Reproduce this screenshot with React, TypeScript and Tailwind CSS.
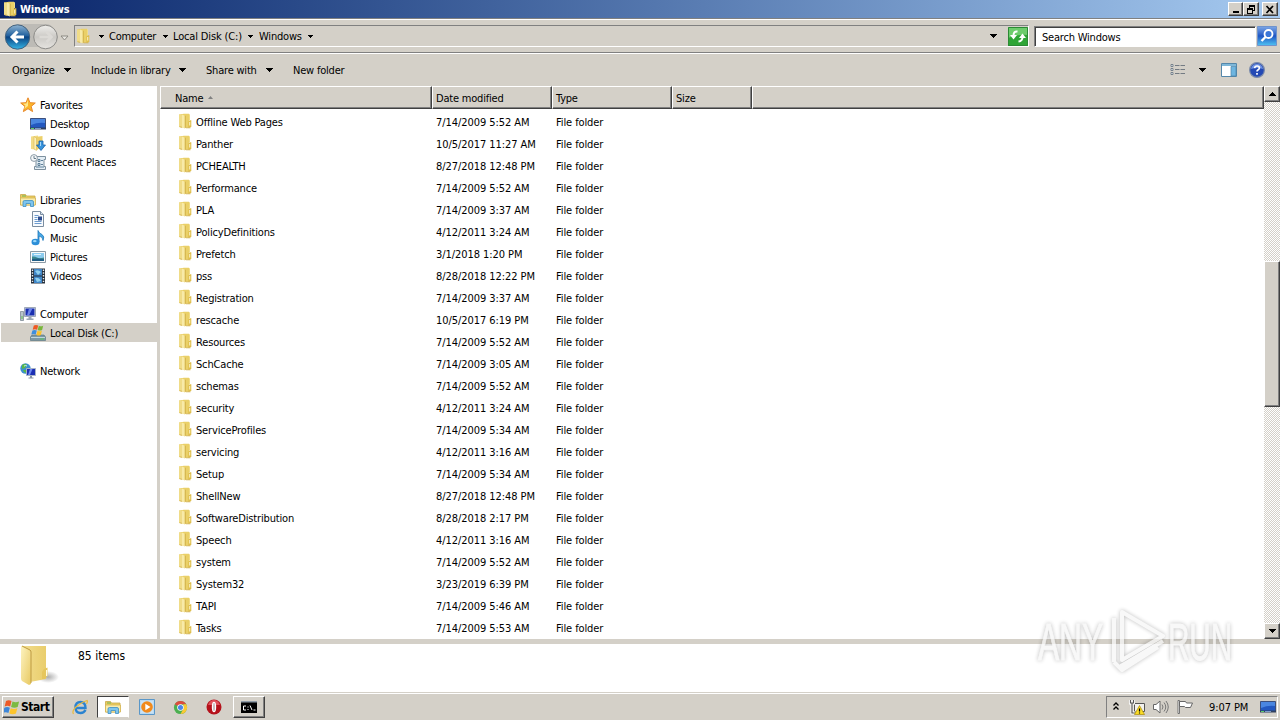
import React from 'react';
import clsx from 'clsx';

interface FileRow {
  name: string;
  date: string;
}

const files: FileRow[] = [
  { name: 'Offline Web Pages', date: '7/14/2009 5:52 AM' },
  { name: 'Panther', date: '10/5/2017 11:27 AM' },
  { name: 'PCHEALTH', date: '8/27/2018 12:48 PM' },
  { name: 'Performance', date: '7/14/2009 5:52 AM' },
  { name: 'PLA', date: '7/14/2009 3:37 AM' },
  { name: 'PolicyDefinitions', date: '4/12/2011 3:24 AM' },
  { name: 'Prefetch', date: '3/1/2018 1:20 PM' },
  { name: 'pss', date: '8/28/2018 12:22 PM' },
  { name: 'Registration', date: '7/14/2009 3:37 AM' },
  { name: 'rescache', date: '10/5/2017 6:19 PM' },
  { name: 'Resources', date: '7/14/2009 5:52 AM' },
  { name: 'SchCache', date: '7/14/2009 3:05 AM' },
  { name: 'schemas', date: '7/14/2009 5:52 AM' },
  { name: 'security', date: '4/12/2011 3:24 AM' },
  { name: 'ServiceProfiles', date: '7/14/2009 5:34 AM' },
  { name: 'servicing', date: '4/12/2011 3:16 AM' },
  { name: 'Setup', date: '7/14/2009 5:34 AM' },
  { name: 'ShellNew', date: '8/27/2018 12:48 PM' },
  { name: 'SoftwareDistribution', date: '8/28/2018 2:17 PM' },
  { name: 'Speech', date: '4/12/2011 3:16 AM' },
  { name: 'system', date: '7/14/2009 5:52 AM' },
  { name: 'System32', date: '3/23/2019 6:39 PM' },
  { name: 'TAPI', date: '7/14/2009 5:46 AM' },
  { name: 'Tasks', date: '7/14/2009 5:53 AM' },
];

/* ---------- icons ---------- */

const FolderIcon = ({ className = 'w-4 h-4' }: { className?: string }) => (
  <svg viewBox="0 0 16 16" className={clsx('shrink-0', className)}>
    <path d="M2 1.500 7 .8h5v14H7l-5-.8z" fill="#ead068" />
    <path d="M2 1.500 5 2v12.500l-3-.7z" fill="#f0dc88" />
    <path d="M5 1.600 7.800 2.800V15.500L5 14.300z" fill="#f8eaa8" />
    <path d="M7.800 2.800h.9v12l-.9.7z" fill="#cfae48" />
    <path d="M12 1.200h1v6h-1z" fill="#f0dc88" />
    <path d="M11.300 8.500 13 7.300h1.300v6L13 14.800h-1.700z" fill="#dfbe4c" />
    <path d="M12.300 9h.9v3.500h-.9z" fill="#fff8da" />
    <path d="M2.500 13.700 5 14.300M9 14.800h4.500" stroke="#d0b050" strokeWidth=".8" />
  </svg>
);

const BigFolder = () => (
  <svg viewBox="0 0 42 44" className="w-[42px] h-[44px] shrink-0">
    <defs>
      <linearGradient id="bf1" x1="0" x2="1" y1="0" y2="1">
        <stop offset="0" stopColor="#fdf3c0" />
        <stop offset="1" stopColor="#e8c962" />
      </linearGradient>
      <linearGradient id="bf3" x1="0" x2="1" y1="0" y2="0">
        <stop offset="0" stopColor="#f2dd8e" />
        <stop offset="1" stopColor="#e9cd6c" />
      </linearGradient>
      <radialGradient id="bf2">
        <stop offset="0" stopColor="#777" stopOpacity=".6" />
        <stop offset="1" stopColor="#777" stopOpacity="0" />
      </radialGradient>
    </defs>
    <ellipse cx="28" cy="33" rx="11" ry="6" fill="url(#bf2)" />
    <path d="M2 2 26 2V35L10 38z" fill="url(#bf3)" />
    <path d="M24 25l3.500-1.500v8L25 35h-3V28z" fill="#e6c65c" />
    <path d="M26 26h1.200v6H26z" fill="#fffbe0" />
    <path d="M1 2 10 6q1 1 1 2v32l-2 1-7-4q-1-1-1-3z" fill="url(#bf1)" />
    <path d="M2 2 10 6q1 1 1 2v31" fill="none" stroke="#b8933a" strokeWidth=".9" />
  </svg>
);

const StarIcon = () => (
  <svg viewBox="0 0 16 16" className="w-4 h-4 shrink-0">
    <path d="M8 .8 10 5.700l5.300.3-4.100 3.400 1.400 5.200L8 11.700l-4.600 2.900 1.400-5.200L.7 6l5.300-.3z" fill="#fbb52a" stroke="#e8892b" strokeWidth="1" />
    <path d="M8 3v6L4 12l1.500-3.500L3 6.800l3.500-.3z" fill="#ffe88a" />
  </svg>
);

const DesktopIcon = () => (
  <svg viewBox="0 0 16 16" className="w-4 h-4 shrink-0">
    <path d="M.5 2.500h15v10H.5z" fill="#2358c0" stroke="#3c4f7c" />
    <path d="M1 3h14v4Q8 6 1 9z" fill="#4a86e0" />
    <path d="M0 11.500h16v2H0z" fill="#31415f" />
    <path d="M1 12h3v1H1z" fill="#5fd06a" />
    <path d="M5 12h6v1H5z" fill="#7e9bc8" />
  </svg>
);

const DownloadsIcon = () => (
  <svg viewBox="0 0 16 16" className="w-4 h-4 shrink-0">
    <path d="M1 1.500 8 .5V15l-7-1z" fill="#f3dc86" />
    <path d="M5 2 12.500 1v13H6z" fill="#ecd06a" />
    <path d="M4 1.500 6.500 3v12.500L4 14z" fill="#fbf0b8" stroke="#d4b04a" strokeWidth=".5" />
    <path d="M9 6h4v4h2.500L11 15.500 6.500 10H9z" fill="#3793dc" stroke="#1b62a8" strokeWidth=".8" />
    <path d="M10 7h1v4h-1z" fill="#a5d8fa" />
  </svg>
);

const RecentIcon = () => (
  <svg viewBox="0 0 16 16" className="w-4 h-4 shrink-0">
    <path d="M6 2.500h9.500v3H14v7h1.500v3H4.500v-3H6z" fill="#e3edf4" stroke="#7d909e" />
    <path d="M8 5.500h2v2H8zM8 9.500h2v2H8zM11 6.500h2M11 10.500h2M6 13h8" fill="none" stroke="#5e8099" />
    <circle cx="4" cy="4" r="3.400" fill="#f5f8fa" stroke="#8c9ba6" />
    <path d="M4 2v2.500h2" fill="none" stroke="#59707f" strokeWidth=".9" />
  </svg>
);

const LibrariesIcon = ({ className = 'w-4 h-4' }: { className?: string }) => (
  <svg viewBox="0 0 16 16" className={clsx('shrink-0', className)}>
    <path d="M.5 2.500h5l1 1.500h8.500v9H.5z" fill="#eccd60" stroke="#c9a749" strokeWidth=".8" />
    <path d="M2 3.500h4v1H2z" fill="#6bb257" />
    <path d="M.5 6h15v7H.5z" fill="#f9ebac" stroke="#d5b550" strokeWidth=".8" />
    <path d="M3 14.500V10q0-1.500 1.500-1.500h7.500q1.500 0 1.500 1.500v4.500h-3v-3H6v3z" fill="#7ec5ee" stroke="#3e8fc4" strokeWidth=".8" />
  </svg>
);

const DocumentIcon = () => (
  <svg viewBox="0 0 16 16" className="w-4 h-4 shrink-0">
    <path d="M2.500.5h8l3 3v12h-11z" fill="#f8fbfe" stroke="#7b8da0" />
    <path d="M10.500.5v3h3" fill="#d6e2ee" stroke="#7b8da0" />
    <path d="M4.500 4.500h4M4.500 6.500h3M4.500 12.500h7M4.500 10.500h7" stroke="#6c9bcf" />
    <path d="M8 5.500h4v4H8z" fill="#2d4c8e" />
    <path d="M4.500 8.500h3" stroke="#6c9bcf" />
  </svg>
);

const MusicIcon = () => (
  <svg viewBox="0 0 16 16" className="w-4 h-4 shrink-0">
    <path d="M8 .5q1 3 4 4 3 2 1 6 0-4-4-4.500V12H8z" fill="#49a9e6" stroke="#1c77ba" strokeWidth=".8" />
    <ellipse cx="5.500" cy="12" rx="4" ry="3.200" fill="#2c8fd8" />
    <ellipse cx="4.800" cy="11.200" rx="1.800" ry="1.100" fill="#9bd8fa" />
  </svg>
);

const PicturesIcon = () => (
  <svg viewBox="0 0 16 16" className="w-4 h-4 shrink-0">
    <path d="M.5 2.500h15v11H.5z" fill="#fafafa" stroke="#8c9aa5" />
    <path d="M2 4h12v8H2z" fill="#8ccbee" />
    <path d="M2 7.500q3-.5 5 1t7 0V12H2z" fill="#3c8a8f" />
    <path d="M2 10q6-1 12 0v2H2z" fill="#1f5e86" />
    <path d="M4 5h7v1H4z" fill="#e2f4fd" />
  </svg>
);

const VideosIcon = () => (
  <svg viewBox="0 0 16 16" className="w-4 h-4 shrink-0">
    <path d="M1 .5h14v15H1z" fill="#26303c" />
    <path d="M4 1h8v6.500H4zM4 8.500h8V15H4z" fill="#3f86c8" />
    <path d="M5 3q3-2 6 1L8 7zM5 10q4-1 6 3l-4 1z" fill="#8fd0ee" />
    <path d="M2.500 1.500v13M13.500 1.500v13" stroke="#e9eef2" strokeWidth="1.400" strokeDasharray="1.400 1.400" />
  </svg>
);

const ComputerIcon = () => (
  <svg viewBox="0 0 16 16" className="w-4 h-4 shrink-0">
    <path d="M.5 5.500h3v9h-3z" fill="#b8c4cc" stroke="#7f8c96" strokeWidth=".8" />
    <path d="M1.500 10h1v3h-1z" fill="#63c04d" />
    <path d="M4.500 1.500h11v9h-11z" fill="#d6dde6" stroke="#8b97a8" strokeWidth=".8" />
    <path d="M5.500 2.500h9v7h-9z" fill="#1a2fb0" />
    <path d="M9 2.500h3.500L9 9.500H7z" fill="#6d86ea" />
    <path d="M8.500 11h3v1.500h2v1.500h-7v-1.500h2z" fill="#9aa6b4" />
  </svg>
);

const DiskIcon = () => (
  <svg viewBox="0 0 16 16" className="w-4 h-4 shrink-0">
    <path d="M2 10h12l1.500 2v3.500H.5V12z" fill="#7e98a4" stroke="#52707e" strokeWidth=".6" />
    <path d="M1 12h14v1H1z" fill="#bfd6de" />
    <path d="M10 13.500h4v1h-4z" fill="#58c862" />
    <path d="M3.800.5q2.200-1 4.400 0L7.100 4.700q-2.200-1-4.400 0z" fill="#ee5a24" />
    <path d="M8.800.8q2.200 1 4.400 0l-1.100 4.200q-2.200 1-4.400 0z" fill="#78b63a" />
    <path d="M2.400 5.400q2.200-1 4.400 0l-1.100 4.200q-2.200-1-4.400 0z" fill="#3e8edc" />
    <path d="M7.500 5.800q2.200 1 4.400 0L10.800 10q-2.200 1-4.400 0z" fill="#fbc129" />
  </svg>
);

const NetworkIcon = () => (
  <svg viewBox="0 0 16 16" className="w-4 h-4 shrink-0">
    <circle cx="5.500" cy="5.500" r="5.200" fill="#3c8fd0" />
    <path d="M2 2q3-2 5 0L5 5l-3 1zM3 7l3 0 1 3q-3 0-4-3z" fill="#58b848" />
    <path d="M4 3q2-1 3 0" stroke="#c9f0f8" fill="none" />
    <path d="M6.500 5.500h9v7h-9z" fill="#1b2fb4" stroke="#a7b3c6" />
    <path d="M10 6h2.500L10 12H8z" fill="#6f8af0" />
    <path d="M10 13h2v1.500h1.500v1h-5v-1H10z" fill="#8794a4" />
  </svg>
);

const WindowsFlag = () => (
  <svg viewBox="1 1.500 14.500 13" className="w-4 h-[15px] shrink-0">
    <path d="M2.800 2.200q2.500-1.500 5 0L6.600 7q-2.400-1.300-5 0z" fill="#ec5a28" />
    <path d="M8.700 2.600q2.800 1.400 6 0L13.400 7.500q-3 1.500-6 0z" fill="#7cba42" />
    <path d="M1.300 8.200q2.500-1.400 5 0L5 13q-2.400-1.300-5 0z" fill="#3d86d8" />
    <path d="M7.100 8.700q2.800 1.400 6 0l-1.300 4.800q-3 1.400-6 0z" fill="#fcc42c" />
  </svg>
);

const Caret = ({ className = 'w-[7px] h-1' }: { className?: string }) => (
  <svg viewBox="0 0 7 4" className={clsx('shrink-0', className)} shapeRendering="crispEdges">
    <path d="M0 0h7L3.500 4z" />
  </svg>
);

const navItems = [
  { label: 'Favorites', icon: <StarIcon />, top: true },
  { label: 'Desktop', icon: <DesktopIcon /> },
  { label: 'Downloads', icon: <DownloadsIcon /> },
  { label: 'Recent Places', icon: <RecentIcon /> },
  null,
  { label: 'Libraries', icon: <LibrariesIcon />, top: true },
  { label: 'Documents', icon: <DocumentIcon /> },
  { label: 'Music', icon: <MusicIcon /> },
  { label: 'Pictures', icon: <PicturesIcon /> },
  { label: 'Videos', icon: <VideosIcon /> },
  null,
  { label: 'Computer', icon: <ComputerIcon />, top: true },
  { label: 'Local Disk (C:)', icon: <DiskIcon />, active: true },
  null,
  { label: 'Network', icon: <NetworkIcon />, top: true },
];

/* ---------- window chrome ---------- */

const raised = 'bg-[#d4d0c8] border border-t-white border-l-white border-r-[#404040] border-b-[#404040] shadow-[inset_-1px_-1px_0_#808080]';

const TitleBar = () => (
  <div className="h-[18px] shrink-0 flex items-center pl-0.5 bg-linear-to-r from-[#0a246a] to-[#a6caf0]">
    <FolderIcon />
    <span className="ml-0.5 text-white font-bold tracking-[-0.1px]">Windows</span>
    <div className="ml-auto mr-0.5 flex">
      <button className={clsx(raised, 'w-[15px] h-3.5 flex items-center justify-center')}>
        <svg viewBox="0 0 10 9" className="w-2.5 h-[9px] shrink-0" shapeRendering="crispEdges"><path d="M2 6h6v2H2z" /></svg>
      </button>
      <button className={clsx(raised, 'w-4 h-3.5 flex items-center justify-center')}>
        <svg viewBox="0 0 10 9" className="w-2.5 h-[9px] shrink-0" shapeRendering="crispEdges">
          <path d="M3 0h6v6H7V5h1V2H4v1H3zM1 3h6v6H1zm1 2v3h4V5z" fillRule="evenodd" />
        </svg>
      </button>
      <button className={clsx(raised, 'ml-[3px] w-4 h-3.5 flex items-center justify-center')}>
        <svg viewBox="0 0 10 9" className="w-2.5 h-[9px] shrink-0"><path d="M1.500 1 8 8M8 1 1.500 8" stroke="#000" strokeWidth="1.700" /></svg>
      </button>
    </div>
  </div>
);

const NavButtons = () => (
  <svg viewBox="0 0 70 30" className="w-[70px] h-[30px] shrink-0">
    <defs>
      <linearGradient id="back" x1="0" x2="0" y1="0" y2="1">
        <stop offset="0" stopColor="#8fb4d2" />
        <stop offset=".45" stopColor="#20609e" />
        <stop offset=".5" stopColor="#0b4382" />
        <stop offset="1" stopColor="#35b5e6" />
      </linearGradient>
      <linearGradient id="fwd" x1="0" x2="0" y1="0" y2="1">
        <stop offset="0" stopColor="#efeeeb" />
        <stop offset=".5" stopColor="#cbc9c5" />
        <stop offset="1" stopColor="#e6e4e0" />
      </linearGradient>
    </defs>
    <path d="M17 3h29q5 0 8 5v12q-4 6-9 6H17z" fill="#bdbbb6" />
    <circle cx="17.500" cy="16" r="12.200" fill="url(#back)" stroke="#43617c" />
    <circle cx="45.500" cy="16" r="11.800" fill="url(#fwd)" stroke="#8c8b88" />
    <path d="M24 16H12.500M17.500 10.500 12 16l5.500 5.500" fill="none" stroke="#fff" strokeWidth="3" />
    <path d="M39.500 16H51M46.500 11l5 5-5 5" fill="none" stroke="#dcdad6" strokeWidth="2.600" />
    <path d="M61 15h7l-3.500 4z" fill="#e9e7e2" stroke="#85827c" strokeWidth=".9" />
  </svg>
);

const AddressBar = () => (
  <div className="h-9 shrink-0 flex items-center border-t border-b border-t-[#808080] border-b-white shadow-[inset_0_1px_0_#fff,inset_0_-1px_0_#808080]">
    <NavButtons />
    <div className="ml-1 h-[22px] flex-1 flex items-center border border-t-[#808080] border-l-[#808080] border-r-white border-b-white">
      <FolderIcon />
      <Caret className="w-[5px] h-[3px] ml-2" />
      <span className="ml-[5px] w-[51px] shrink-0 tracking-[-0.26px]">Computer</span>
      <Caret className="w-[5px] h-[3px] ml-[3px]" />
      <span className="ml-[5px] w-[69px] shrink-0 tracking-[-0.15px]">Local Disk (C:)</span>
      <Caret className="w-[5px] h-[3px] ml-1.5" />
      <span className="ml-1.5 w-[43px] shrink-0">Windows</span>
      <Caret className="w-[5px] h-[3px] ml-1.5" />
      <Caret className="w-[7px] h-1 ml-auto mr-[11px]" />
      <svg viewBox="0 0 20 19" className="w-5 h-[19px] shrink-0">
        <path d="M0 0h20v19H0z" fill="#2fa536" />
        <path d="M0 0h20v8Q10 7 0 11z" fill="#6dcc6c" />
        <path d="M.5.5h19v18H.5z" fill="none" stroke="#2c8a35" />
        <path d="M9.500 4.500Q5.500 4 5.500 8.500M14.500 10q0 4-4 4.500" fill="none" stroke="#fff" strokeWidth="2" />
        <path d="M2 8h7l-3.500 4.500zM11 11h7l-3.500-4.500z" fill="#fff" />
      </svg>
    </div>
    <div className="ml-[5px] w-[222px] shrink-0 h-[21px] bg-white border border-t-[#808080] border-l-[#808080] border-r-white border-b-white shadow-[inset_1px_1px_0_#404040] flex items-center pl-[7px] pt-0.5">
      <span>Search Windows</span>
    </div>
    <svg viewBox="0 0 20 20" className="ml-px mr-[3px] w-5 h-5 shrink-0">
      <defs>
        <linearGradient id="find" x1="0" x2="0" y1="0" y2="1">
          <stop offset="0" stopColor="#7da7e6" />
          <stop offset=".5" stopColor="#1f56c4" />
          <stop offset="1" stopColor="#4fc3f2" />
        </linearGradient>
      </defs>
      <path d="M.5.5h19v19H.5z" fill="url(#find)" stroke="#6f93cc" />
      <circle cx="11.500" cy="8" r="4" fill="#3a76d8" stroke="#fff" strokeWidth="1.800" />
      <path d="M8.500 11 4.500 15" stroke="#fff" strokeWidth="2.400" />
    </svg>
  </div>
);

const CommandBar = () => (
  <div className="h-8 shrink-0 flex items-center pl-3">
    <span className="w-[52px]">Organize</span>
    <Caret />
    <span className="ml-5 w-[88px]">Include in library</span>
    <Caret />
    <span className="ml-5 w-[60px]">Share with</span>
    <Caret />
    <span className="ml-5">New folder</span>
    <div className="ml-auto mr-[15px] flex items-center">
      <svg viewBox="0 0 16 14" className="w-4 h-3.5">
        <path d="M1 1.500h2v2H1zM1 5.500h2v2H1zM1 9.500h2v2H1z" fill="#fff" stroke="#75818c" />
        <path d="M5 2.500h4.500M10.500 2.500H15M5 6.500h4.500M10.500 6.500H15M5 10.500h4.500M10.500 10.500H15" stroke="#737b83" />
      </svg>
      <Caret className="w-[7px] h-1 ml-[13px]" />
      <svg viewBox="0 0 16 14" className="ml-[15px] w-4 h-3.5">
        <path d="M.5.5h15v13H.5z" fill="#fff" stroke="#5487aa" />
        <path d="M1 1h14v2H1z" fill="#7eb7d8" />
        <path d="M10 3.500h5V13h-5z" fill="#6db5e0" stroke="#4a83a8" strokeWidth=".7" />
      </svg>
      <svg viewBox="0 0 16 16" className="ml-3 w-4 h-4">
        <circle cx="8" cy="8" r="7.400" fill="#2449b4" stroke="#7c8cab" strokeWidth="1.200" />
        <path d="M2 7q1-5 6-5t6 5q-6-2-12 0z" fill="#6f92e2" />
        <path d="M5.600 6.200Q5.800 4 8.100 4t2.300 2q0 1-1.200 1.700T8 9.500M8 11v1.700" fill="none" stroke="#fff" strokeWidth="1.700" />
      </svg>
    </div>
  </div>
);

const Sidebar = () => (
  <div className="w-[157px] shrink-0 bg-white pt-[9px]">
    {navItems.map((item, i) =>
      item ? (
        <div
          key={item.label}
          className={clsx('h-[19px] ml-px flex items-center', item.top ? 'pl-[19px]' : 'pl-[29px]', item.active && 'bg-[#d4d0c8]')}
        >
          {item.icon}
          <span className="ml-1 pt-0.5">{item.label}</span>
        </div>
      ) : (
        <div key={i} className="h-[19px]" />
      )
    )}
  </div>
);

const headerCell = 'h-full flex items-center pl-[3px] pt-0.5 border-t border-l border-r border-b border-t-white border-l-white border-r-[#404040] border-b-[#404040] shadow-[inset_-1px_-1px_0_#808080]';

const FileList = () => (
  <div className="flex-1 min-w-0 bg-white">
    <div className="h-[23px] flex bg-[#d4d0c8]">
      <div className={clsx(headerCell, 'w-[272px]')}>
        <span className="ml-[11px]">Name</span>
        <svg viewBox="0 0 5 3" className="ml-[5px] mb-0.5 w-[5px] h-[3px]"><path d="M0 3h5L2.500 0z" fill="#808080" /></svg>
      </div>
      <div className={clsx(headerCell, 'w-[120px]')}>Date modified</div>
      <div className={clsx(headerCell, 'w-[120px]')}>Type</div>
      <div className={clsx(headerCell, 'w-20')}>Size</div>
      <div className={clsx(headerCell, 'flex-1')} />
    </div>
    <div className="pt-0.5">
      {files.map(f => (
        <div key={f.name} className="h-[22px] flex items-center">
          <div className="w-[276px] pl-[17px] flex items-center">
            <FolderIcon className="w-4 h-4 mb-0.5" />
            <span className="ml-[3px] tracking-[-0.16px]">{f.name}</span>
          </div>
          <span className="w-[120px] tracking-[-0.06px]">{f.date}</span>
          <span className="tracking-[-0.1px]">File folder</span>
        </div>
      ))}
    </div>
  </div>
);

const Scrollbar = () => (
  <div className="w-4 shrink-0 flex flex-col bg-[repeating-conic-gradient(#d4d0c8_0_25%,#fff_0_50%)] bg-[length:2px_2px]">
    <div className={clsx(raised, 'h-4 flex items-center justify-center')}>
      <Caret className="w-[7px] h-1 rotate-180" />
    </div>
    <div className={clsx(raised, 'mt-[159px] h-[146px]')} />
    <div className={clsx(raised, 'mt-auto h-4 flex items-center justify-center')}>
      <Caret />
    </div>
  </div>
);

const Watermark = () => (
  <svg viewBox="0 0 250 80" className="absolute left-[1030px] top-[600px] w-[250px] h-20 opacity-75 drop-shadow-[0_0_2px_rgba(0,0,0,0.35)]">
    <g fill="#f6f6f6" stroke="#f6f6f6" strokeWidth=".8" fontFamily="Liberation Sans Narrow, Liberation Sans, sans-serif" fontSize="51">
      <text x="8" y="60" textLength="65" lengthAdjust="spacingAndGlyphs">ANY</text>
      <text x="138" y="60" textLength="64" lengthAdjust="spacingAndGlyphs">RUN</text>
    </g>
    <path d="M92 12 133 36 92 60zM84 18v44M91 70v-4l42-25M84 62l8 8 36-23" fill="none" stroke="#f6f6f6" strokeWidth="4" strokeLinejoin="round" />
  </svg>
);

/* ---------- taskbar ---------- */

const IeIcon = () => (
  <svg viewBox="0 0 16 16" className="w-4 h-4">
    <path d="M13.500 11Q12 14 8.500 14 3.500 14 3.500 8.500T8.500 3q5 0 5 6H4" fill="none" stroke="#2b83d0" strokeWidth="2.400" />
    <path d="M1.500 15Q-.5 12 4.500 7.500T15 1.500Q16 2.500 14.500 5" fill="none" stroke="#e9b93c" strokeWidth="1.200" />
  </svg>
);

const PlayerIcon = () => (
  <svg viewBox="0 0 16 16" className="w-4 h-4">
    <path d="M.5.5h15v15H.5z" fill="#b9daf2" stroke="#5a97c8" />
    <path d="M2 2h12v12H2z" fill="#c9e2f5" />
    <circle cx="8" cy="8" r="5.800" fill="#f18a1c" />
    <path d="M6.300 4.800v6.400L11.500 8z" fill="#fff" />
  </svg>
);

const ChromeIcon = () => (
  <svg viewBox="0 0 16 16" className="w-[15px] h-[15px]">
    <circle cx="8" cy="8" r="7" fill="#4caf50" />
    <path d="M8 8 1.900 4.500A7 7 0 0 1 14.100 4.500H8z" fill="#dd4b3e" />
    <path d="M14.100 4.500A7 7 0 0 1 8 15l3-5.500V4.500z" fill="#fbc934" />
    <circle cx="8" cy="8" r="3.500" fill="#fff" />
    <circle cx="8" cy="8" r="2.700" fill="#4a86e8" />
  </svg>
);

const OperaIcon = () => (
  <svg viewBox="0 0 16 16" className="w-4 h-4">
    <circle cx="8" cy="8" r="7.500" fill="#b5121b" />
    <path d="M2 6q2-5 6-5t6 5z" fill="#e0525a" />
    <ellipse cx="8" cy="8" rx="2.200" ry="5.300" fill="#fff" />
    <ellipse cx="8" cy="8" rx="1" ry="4.300" fill="#c9bcbc" />
  </svg>
);

const Taskbar = () => (
  <div className="h-[27px] shrink-0 flex items-start pt-[3px] pl-0.5 bg-[#d4d0c8] shadow-[inset_0_1px_0_#fff]">
    <button className={clsx(raised, 'w-[52px] h-[22px] flex items-center pl-px')}>
      <WindowsFlag />
      <span className="ml-px font-bold tracking-[-0.45px] text-[12px]">Start</span>
    </button>
    <div className="ml-[18px] h-[22px] flex items-center"><IeIcon /></div>
    <div className="ml-[9px] w-8 h-[22px] bg-white border border-t-[#404040] border-l-[#404040] border-r-white border-b-[#d4d0c8] flex items-center justify-center">
      <LibrariesIcon />
    </div>
    <div className="ml-2.5 h-[22px] flex items-center"><PlayerIcon /></div>
    <div className="ml-[18px] h-[22px] flex items-center"><ChromeIcon /></div>
    <div className="ml-[18px] h-[22px] flex items-center"><OperaIcon /></div>
    <div className={clsx(raised, 'ml-[11px] w-8 h-[22px] flex items-center justify-center')}>
      <svg viewBox="0 0 16 12" className="w-4 h-3">
        <path d="M0 0h16v12H0z" />
        <path d="M0 0h16v1.500H0z" fill="#8e9aa6" />
        <path d="M5 5H2.500v4H5M7 5.500v1M7 8v1M9 4.500l2 4.500M12.500 9h2" fill="none" stroke="#fff" />
      </svg>
    </div>
    <div className="ml-auto mr-0.5 w-[172px] h-[22px] flex items-center border border-t-[#808080] border-l-[#808080] border-r-white border-b-white">
      <svg viewBox="0 0 6 8" className="ml-1.5 mb-0.5 w-1.5 h-2"><path d="M.5 3.500 3 1l2.500 2.500M.5 7.500 3 5l2.500 2.500" fill="none" stroke="#000" strokeWidth="1.300" /></svg>
      <svg viewBox="0 0 16 16" className="ml-2.5 w-4 h-4">
        <path d="M5.500 4.500h10v8h-10z" fill="#f2f1ee" stroke="#555" />
        <path d="M1.500 1v3h3V1M3 4v10h5" fill="none" stroke="#fff" strokeWidth="3" />
        <path d="M1.500 1v3h3V1M3 4v10h5" fill="none" stroke="#555" strokeWidth="1.200" />
        <path d="M10.500 6.500 15.500 15.500h-10z" fill="#fadc26" stroke="#a98a0c" strokeWidth=".7" />
        <path d="M10.500 9.500v3M10.500 13.600v1" stroke="#000" strokeWidth="1.200" />
      </svg>
      <svg viewBox="0 0 16 16" className="ml-2 w-4 h-4">
        <path d="M.5 5.500H3L7 2v12l-4-3.500H.5z" fill="#fff" stroke="#666" />
        <path d="M9 5.500q2 2.500 0 5M11 3.500q3.500 4.500 0 9M13 2q4.500 6 0 12" fill="none" stroke="#777" />
      </svg>
      <svg viewBox="0 0 16 16" className="ml-2 w-4 h-4">
        <path d="M1 1.500h1.500v13H1z" fill="#fff" stroke="#666" strokeWidth=".9" />
        <path d="M2.500 2.500h6l1 1.500h6l-2 4.500H8.500l-1-1h-5z" fill="#fff" stroke="#666" />
      </svg>
      <span className="ml-4 w-[42px] tracking-[-0.08px]">9:07 PM</span>
      <div className="ml-[9px]"><DesktopIcon /></div>
    </div>
  </div>
);

const App: React.FC = () => {
  return (
    <div className="relative w-[1280px] h-[720px] overflow-hidden flex flex-col bg-[#d4d0c8] text-black text-[11px] leading-[13px] whitespace-nowrap font-[Tahoma,'DejaVu_Sans_Condensed','DejaVu_Sans',sans-serif] [font-stretch:condensed] tracking-[-0.2px]">
      <TitleBar />
      <AddressBar />
      <CommandBar />
      <div className="h-[553px] shrink-0 flex">
        <Sidebar />
        <div className="w-[3px] shrink-0" />
        <FileList />
        <Scrollbar />
      </div>
      <div className="mt-[5px] h-[48px] shrink-0 flex bg-white pl-5">
        <BigFolder />
        <span className="ml-4 mt-[5px] text-[12px] leading-[14px] tracking-[0px]">85 items</span>
      </div>
      <div className="flex-1" />
      <Taskbar />
      <Watermark />
    </div>
  );
};

export default App;
